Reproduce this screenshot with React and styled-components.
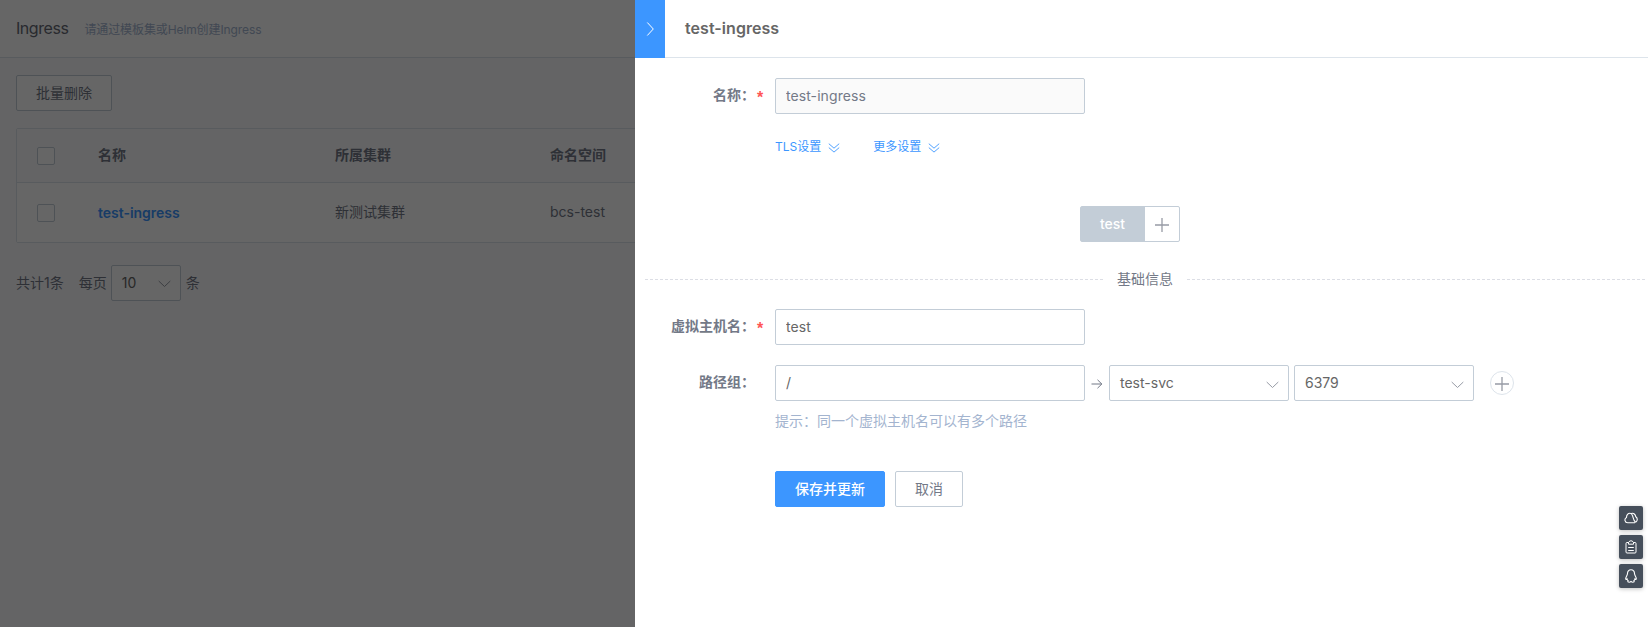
import React from "react";
import styled, { createGlobalStyle, css } from "styled-components";

const Global = createGlobalStyle`
  * { box-sizing: border-box; }
  body {
    margin: 0;
    overflow: hidden;
    background: #fafbfd;
    color: #737987;
    font: 14px/20px Inter, "Noto Sans CJK SC", sans-serif;
  }
  button, input { font: inherit; color: inherit; }
  svg { display: block; flex: none; fill: none; stroke: currentColor; }
`;

const Screen = styled.div`
  position: relative;
  height: 627px;
  overflow: hidden;
`;
const PageHeader = styled.header`
  display: flex;
  align-items: center;
  height: 58px;
  padding-left: 16px;
  background: #fff;
  border-bottom: 1px solid #dde4eb;
`;
const PageTitle = styled.h1`
  margin: 0 16px 1px 0;
  font-size: 16px;
  font-weight: 400;
  letter-spacing: -0.45px;
  color: #666a75;
`;
const PageHint = styled.span`
  padding-top: 2px;
  font-size: 12px;
  letter-spacing: -0.1px;
  color: #a3b4cf;
`;
const PageBody = styled.main`
  padding: 17px 16px;
`;
const Button = styled.button`
  height: 36px;
  width: ${(p) => p.$width}px;
  padding: 0;
  border: 1px solid ${(p) => (p.$primary ? "#3c96ff" : "#c3cdd7")};
  border-radius: 2px;
  background: ${(p) => (p.$primary ? "#3c96ff" : "#fff")};
  color: ${(p) => (p.$primary ? "#fff" : "#737987")};
  font-weight: ${(p) => (p.$primary ? 500 : 400)};
  line-height: 34px;
`;
const Table = styled.div`
  margin-top: 17px;
  border: 1px solid #dde4eb;
  border-radius: 2px;
`;
const Row = styled.div`
  display: grid;
  grid-template-columns: 81px 237px 215px 1fr;
  align-items: center;
  height: ${(p) => (p.$head ? 54 : 59)}px;
  font-weight: ${(p) => (p.$head ? 700 : 400)};
  background: ${(p) => (p.$head ? "#fafbfd" : "#fff")};
  ${(p) => p.$head && css`border-bottom: 1px solid #dde4eb;`}
  span { margin-bottom: 1px; }
`;
const Checkbox = styled.i`
  display: block;
  width: 18px;
  height: 18px;
  margin-left: 20px;
  border: 1px solid #c3cdd7;
  border-radius: 2px;
  background: #fff;
`;
const RowLink = styled.a`
  font-weight: 600;
  letter-spacing: -0.02px;
  color: #3c96ff;
`;
const Pager = styled.div`
  display: flex;
  align-items: center;
  margin-top: 22px;
`;
const PagerText = styled.span`
  margin-right: ${(p) => p.$gap || 0}px;
`;
const Mask = styled.div`
  position: absolute;
  inset: 0;
  background: rgba(0, 0, 0, 0.6);
`;
const Drawer = styled.aside`
  position: absolute;
  inset: 0 0 0 635px;
  background: #fff;
`;
const DrawerHeader = styled.header`
  display: flex;
  align-items: center;
  height: 58px;
  border-bottom: 1px solid #dde4eb;
`;
const Handle = styled.button`
  display: flex;
  align-items: center;
  justify-content: center;
  align-self: flex-start;
  width: 30px;
  height: 58px;
  padding: 0;
  border: 0;
  background: #3c96ff;
  color: #fff;
`;
const DrawerTitle = styled.h2`
  margin: 0 0 2px 20px;
  font-size: 16px;
  font-weight: 600;
  letter-spacing: 0.05px;
  color: #666;
`;
const Form = styled.form`
  padding-top: 20px;
`;
const Field = styled.div`
  display: flex;
  align-items: center;
  height: 36px;
  margin-bottom: ${(p) => p.$gap || 0}px;
`;
const Label = styled.label`
  display: flex;
  justify-content: flex-end;
  width: 120px;
  margin-right: 20px;
  padding-bottom: 2px;
  font-weight: 700;
`;
const Required = styled.span`
  width: 8px;
  margin: 3px -10px -3px 2px;
  font-family: "Liberation Sans", sans-serif;
  font-size: 16px;
  color: #ff5656;
`;
const Input = styled.input`
  width: 310px;
  height: 36px;
  padding: 0 10px 2px;
  border: 1px solid #c3cdd7;
  border-radius: 2px;
  outline: 0;
  background: #fff;
  color: #666;
  letter-spacing: 0.08px;
  &:disabled { background: #fafafa; color: #737987; }
`;
const Arrow = styled.span`
  width: 24px;
  padding: 1px 0 0 6px;
`;
const SelectBox = styled.div`
  display: flex;
  align-items: center;
  justify-content: space-between;
  width: ${(p) => p.$width}px;
  height: 36px;
  margin-right: 5px;
  padding: 0 9px 0 10px;
  border: 1px solid #c3cdd7;
  border-radius: 2px;
  background: #fff;
  color: #666;
  svg { margin-top: ${(p) => (p.$width > 100 ? 4 : 1)}px; color: #979ba5; }
`;
const AddRound = styled.button`
  display: flex;
  align-items: center;
  justify-content: center;
  width: 24px;
  height: 24px;
  margin-left: 11px;
  padding: 1px 0 0;
  border: 1px solid #dde4eb;
  border-radius: 50%;
  background: #fff;
  color: #979ba5;
`;
const Toggles = styled.div`
  display: flex;
  gap: 33px;
  height: 20px;
  margin: 23px 0 49px 140px;
`;
const Toggle = styled.a`
  display: flex;
  align-items: center;
  gap: 7px;
  font-size: 12px;
  color: #3c96ff;
  svg { margin-top: 1px; }
`;
const Tabs = styled.div`
  display: flex;
  width: 100px;
  height: 36px;
  margin-left: 445px;
  border: 1px solid #c3cdd7;
  border-radius: 2px;
`;
const Tab = styled.span`
  width: 64px;
  padding-right: 1px;
  background: #c3cdd7;
  color: #fff;
  font-weight: 500;
  line-height: 34px;
  text-align: center;
`;
const TabAdd = styled.span`
  display: flex;
  flex: 1;
  align-items: center;
  justify-content: center;
  padding-top: 2px;
  color: #979ba5;
`;
const Divider = styled.div`
  display: flex;
  align-items: center;
  gap: 14px;
  height: 20px;
  margin: 27px 3px 20px 10px;
  &::before, &::after {
    content: "";
    flex: 1;
    height: 1px;
    background: repeating-linear-gradient(90deg, #dcdee5 0 3px, transparent 3px 5px);
  }
`;
const Hint = styled.p`
  height: 20px;
  margin: 10px 0 40px 140px;
  color: #a3b4cf;
`;
const Actions = styled.div`
  display: flex;
  gap: 10px;
  margin-left: 140px;
`;
const Tools = styled.nav`
  position: absolute;
  top: 506px;
  right: 5px;
  display: grid;
  gap: 5px;
`;
const Tool = styled.button`
  display: flex;
  align-items: center;
  justify-content: center;
  width: 24px;
  height: 24px;
  padding: 0;
  border: 0;
  border-radius: 2px;
  background: #464f5b;
  box-shadow: 0 1px 4px rgba(0, 0, 0, 0.25);
  color: #fff;
`;

const ChevronDown = () => (
  <svg width="13" height="8" viewBox="0 0 13 8"><path d="M.7 1l5.8 5.5L12.3 1" /></svg>
);
const ChevronRight = () => (
  <svg width="9" height="16" viewBox="0 0 9 16"><path d="M1.300 1.500l6 6.500-6 6.500" /></svg>
);
const DoubleDown = () => (
  <svg width="12" height="10" viewBox="0 0 12 10"><path d="M.8.7L6 5.2 11.2.7M.8 4.600L6 9.100l5.200-4.500" strokeWidth=".9" /></svg>
);
const Plus = () => (
  <svg width="14" height="14" viewBox="0 0 14 14"><path d="M7 0v14M0 7h14" strokeWidth="1.3" /></svg>
);
const ArrowRight = () => (
  <svg width="12" height="10" viewBox="0 0 12 10"><path d="M.5 5H11M6.500.8L10.800 5 6.500 9.200" /></svg>
);
const CloudIcon = () => (
  <svg width="14" height="12" viewBox="0 0 14 12" strokeWidth="1.1"><path d="M11 10.700H3.700A2.800 2.800 0 0 1 2.500 5.400C2.500 3 4 1.300 6 1.300c1.400 0 2.100 1.100 2.600 2.600.6 1.900.8 4.600 3 6.300M7.400 1.500c2.300-.7 4 .8 4.400 3.300C13 5.600 13.400 6.800 13.200 8c-.2 1-.8 1.700-1.600 2.200" /></svg>
);
const ClipboardIcon = () => (
  <svg width="12" height="14" viewBox="0 0 12 14"><path d="M3.500 2.500H2a1 1 0 0 0-1 1V12a1 1 0 0 0 1 1h8a1 1 0 0 0 1-1V3.500a1 1 0 0 0-1-1H8.500M3.500 4.200V2.300L5 .9h2l1.500 1.400v1.900zM3.200 7.500h5.600M3.200 10.500h5.600" /></svg>
);
const PenguinIcon = () => (
  <svg width="12" height="14" viewBox="0 0 12 14" strokeWidth="1.1"><path d="M6 .8C3.700.8 2.500 2.500 2.500 4.600c0 1.900-1.800 3.300-1.800 5 0 1 .5 1.200 1.300.3.200 1 .7 1.600 1.200 2-.9.900 0 1.300 1.100 1.300.8 0 1.200-.3 1.700-.7.500.4.900.7 1.700.7 1.100 0 2-.4 1.100-1.300.5-.4 1-1 1.200-2 .8.900 1.300.7 1.300-.3 0-1.700-1.800-3.100-1.800-5C9.500 2.500 8.300.8 6 .8z" /></svg>
);

const Select = ({ value, width }) => (
  <SelectBox $width={width}><span>{value}</span><ChevronDown /></SelectBox>
);

export default function App() {
  return (
    <Screen>
      <Global />
      <PageHeader>
        <PageTitle>Ingress</PageTitle>
        <PageHint>请通过模板集或Helm创建Ingress</PageHint>
      </PageHeader>
      <PageBody>
        <Button $width={96}>批量删除</Button>
        <Table>
          <Row $head><Checkbox /><span>名称</span><span>所属集群</span><span>命名空间</span></Row>
          <Row><Checkbox /><RowLink>test-ingress</RowLink><span>新测试集群</span><span>bcs-test</span></Row>
        </Table>
        <Pager>
          <PagerText $gap={15}>共计1条</PagerText>
          <PagerText $gap={4}>每页</PagerText>
          <Select value="10" width={70} />
          <PagerText>条</PagerText>
        </Pager>
      </PageBody>
      <Mask />
      <Drawer>
        <DrawerHeader>
          <Handle type="button" aria-label="收起"><ChevronRight /></Handle>
          <DrawerTitle>test-ingress</DrawerTitle>
        </DrawerHeader>
        <Form>
          <Field>
            <Label>名称：<Required>*</Required></Label>
            <Input defaultValue="test-ingress" disabled />
          </Field>
          <Toggles>
            <Toggle>TLS设置<DoubleDown /></Toggle>
            <Toggle>更多设置<DoubleDown /></Toggle>
          </Toggles>
          <Tabs><Tab>test</Tab><TabAdd><Plus /></TabAdd></Tabs>
          <Divider>基础信息</Divider>
          <Field $gap={20}>
            <Label>虚拟主机名：<Required>*</Required></Label>
            <Input defaultValue="test" />
          </Field>
          <Field>
            <Label>路径组：</Label>
            <Input defaultValue="/" />
            <Arrow><ArrowRight /></Arrow>
            <Select value="test-svc" width={180} />
            <Select value="6379" width={180} />
            <AddRound type="button" aria-label="添加"><Plus /></AddRound>
          </Field>
          <Hint>提示：同一个虚拟主机名可以有多个路径</Hint>
          <Actions>
            <Button type="button" $primary $width={110}>保存并更新</Button>
            <Button type="button" $width={68}>取消</Button>
          </Actions>
        </Form>
      </Drawer>
      <Tools>
        <Tool><CloudIcon /></Tool>
        <Tool><ClipboardIcon /></Tool>
        <Tool><PenguinIcon /></Tool>
      </Tools>
    </Screen>
  );
}
